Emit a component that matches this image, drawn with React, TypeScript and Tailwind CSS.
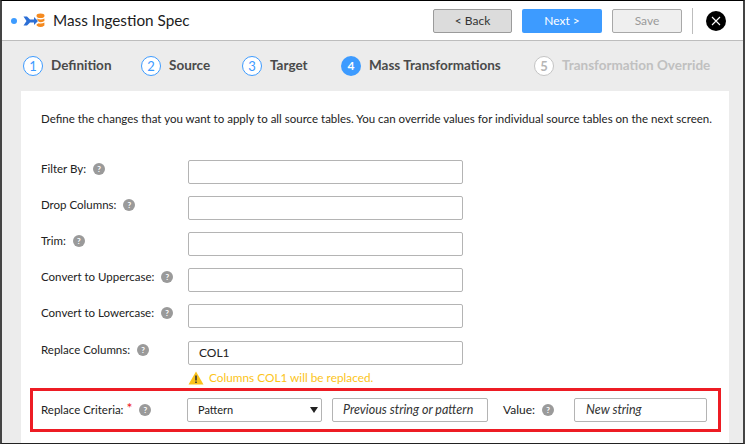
const steps = [
  { n: 1, label: 'Definition', width: 'w-[90px]' },
  { n: 2, label: 'Source', width: 'w-[73px]' },
  { n: 3, label: 'Target', width: 'w-[71px]' },
];

const fields = ['Filter By:', 'Drop Columns:', 'Trim:', 'Convert to Uppercase:', 'Convert to Lowercase:'];

function Help() {
  return (
    <span className="ml-[7px] flex h-[12px] w-[12px] shrink-0 items-center justify-center rounded-full bg-[#9a9a9a] text-[8px] font-bold leading-none text-white">
      ?
    </span>
  );
}

function Logo() {
  return (
    <svg width="22" height="16" viewBox="0 0 22 16" className="ml-[6px]">
      <path d="M0.5 3.5 L4 3.5 L7 6.5 L11 6.5 L11 4 L15 8 L11 12 L11 9.5 L7 9.5 L4 12.5 L0.5 12.5 L3.5 8 Z" fill="#2c6fd6" />
      <g fill="#f58a1f">
        <ellipse cx="17.5" cy="2.8" rx="4" ry="2.3" />
        <path d="M13.8 5.4 Q17.5 7.6 21.4 5.4 L21.4 8 Q17.5 10 15.5 8.6 Z" />
        <path d="M15.5 10.2 Q18.5 11 21.4 9.6 L21.4 12.6 Q17.5 15.6 13.6 12.6 L13.6 11.6 Z" />
      </g>
    </svg>
  );
}

export default function App() {
  return (
    <div className="flex h-[444px] w-[745px] flex-col overflow-hidden border-t border-b border-l-2 border-r-2 border-t-black border-b-[#222] border-l-[#444] border-r-[#444] bg-[#ececec] font-['Lato',sans-serif] text-[#222]">
      <header className="flex h-[40px] shrink-0 items-center border-b border-[#bdbdbd] bg-white">
        <span className="ml-[9px] h-[6px] w-[6px] rounded-full bg-[#3d9bff]" />
        <Logo />
        <h1 className="ml-[8px] text-[15.3px] leading-none text-[#1c1c1c]">Mass Ingestion Spec</h1>
        <div className="ml-auto flex items-center">
          <button className="h-[24px] w-[79px] rounded-[2px] border border-[#9b9b9b] bg-[#dcdcdc] text-[12px] text-[#333]">&lt; Back</button>
          <button className="ml-[10px] h-[24px] w-[80px] rounded-[2px] bg-[#3d9bff] text-[12px] text-white">Next &gt;</button>
          <button className="ml-[10px] h-[24px] w-[70px] rounded-[2px] border border-[#a8a8a8] bg-[#efefef] text-[12px] text-[#9a9a9a]">Save</button>
          <span className="ml-[10px] h-[26px] w-px bg-[#bdbdbd]" />
          <span className="ml-[13px] mr-[17px] flex h-[20px] w-[20px] items-center justify-center rounded-full bg-black">
            <svg width="10" height="10" viewBox="0 0 10 10" stroke="white" strokeWidth="1.1">
              <path d="M1 1 L9 9 M9 1 L1 9" />
            </svg>
          </span>
        </div>
      </header>

      <nav className="flex h-[50px] shrink-0 items-center pl-[21px] text-[13.5px] font-bold text-[#4a4a4a]">
        {steps.map((s) => (
          <div key={s.n} className="flex items-center">
            <span className="flex h-[20px] w-[20px] shrink-0 items-center justify-center rounded-full border border-[#3d9bff] bg-white text-[13px] font-normal leading-none text-[#3d9bff]">
              {s.n}
            </span>
            <span className={`ml-[8px] pb-[1px] ${s.width}`}>{s.label}</span>
          </div>
        ))}
        <span className="flex h-[20px] w-[20px] shrink-0 items-center justify-center rounded-full bg-[#3d9bff] text-[12px] leading-none text-white">4</span>
        <span className="ml-[8px] w-[165px] pb-[1px]">Mass Transformations</span>
        <span className="flex h-[20px] w-[20px] shrink-0 items-center justify-center rounded-full border border-[#c4c4c4] bg-white text-[13px] leading-none text-[#b5b5b5]">5</span>
        <span className="ml-[8px] whitespace-nowrap pb-[1px] text-[#c0c0c0]">Transformation Override</span>
      </nav>

      <main className="ml-[19px] mr-[14px] flex-1 bg-white pl-[20px] pt-[20px] text-[11.5px]">
        <p className="h-[16px] whitespace-nowrap text-[11.5px] leading-[16px]">
          Define the changes that you want to apply to all source tables. You can override values for individual source tables on the next screen.
        </p>
        <div className="mt-[33px] flex flex-col gap-[12px]">
          {fields.map((f) => (
            <div key={f} className="flex h-[24px] items-center">
              <div className="flex w-[147px] -translate-y-[3px] items-center">
                {f}
                <Help />
              </div>
              <input className="h-[24px] w-[275px] rounded-[2px] border border-[#b4b4b4] bg-white" />
            </div>
          ))}
          <div className="mt-[1px] flex h-[24px] items-center">
            <div className="flex w-[147px] -translate-y-[3px] items-center">
              Replace Columns:
              <Help />
            </div>
            <div className="flex h-[24px] w-[275px] items-center rounded-[2px] border border-[#b4b4b4] bg-white pl-[10px] text-[12px] text-[#222]">COL1</div>
          </div>
        </div>
        <div className="ml-[147px] mt-[5px] flex h-[16px] items-center text-[11.8px] text-[#fcc419]">
          <svg width="16" height="14" viewBox="0 0 16 14" className="mr-[5px]">
            <path d="M8 0.5 L15.5 13.5 L0.5 13.5 Z" fill="#fbc21a" />
            <path d="M7.2 4.5 H8.8 V9.5 H7.2 Z M7.2 10.5 H8.8 V12 H7.2 Z" fill="#333" />
          </svg>
          Columns COL1 will be replaced.
        </div>
        <div className="-ml-[11px] mt-[2px] flex h-[44px] w-[691px] items-center border-[3px] border-[#ed1c24] pl-[8px]">
          <div className="flex w-[146px] items-center">
            Replace Criteria:<span className="ml-[3px] -translate-y-[2px] text-[14px] leading-none text-[#ed1c24]">*</span>
            <Help />
          </div>
          <div className="flex h-[24px] w-[135px] items-center justify-between rounded-[2px] border border-[#b4b4b4] pl-[10px] pr-[3px] text-[11px]">
            Pattern
            <svg width="8" height="6" viewBox="0 0 8 6"><path d="M0 0 H8 L4 6 Z" fill="#222" /></svg>
          </div>
          <div className="ml-[10px] flex h-[24px] w-[156px] items-center rounded-[2px] border border-[#b4b4b4] pl-[10px] text-[12.5px] italic text-[#333]">Previous string or pattern</div>
          <div className="ml-[15px] flex w-[71px] items-center text-[12px]">
            Value:
            <Help />
          </div>
          <div className="flex h-[24px] w-[133px] items-center rounded-[2px] border border-[#b4b4b4] pl-[11px] text-[12.5px] italic text-[#333]">New string</div>
        </div>
      </main>
    </div>
  );
}
